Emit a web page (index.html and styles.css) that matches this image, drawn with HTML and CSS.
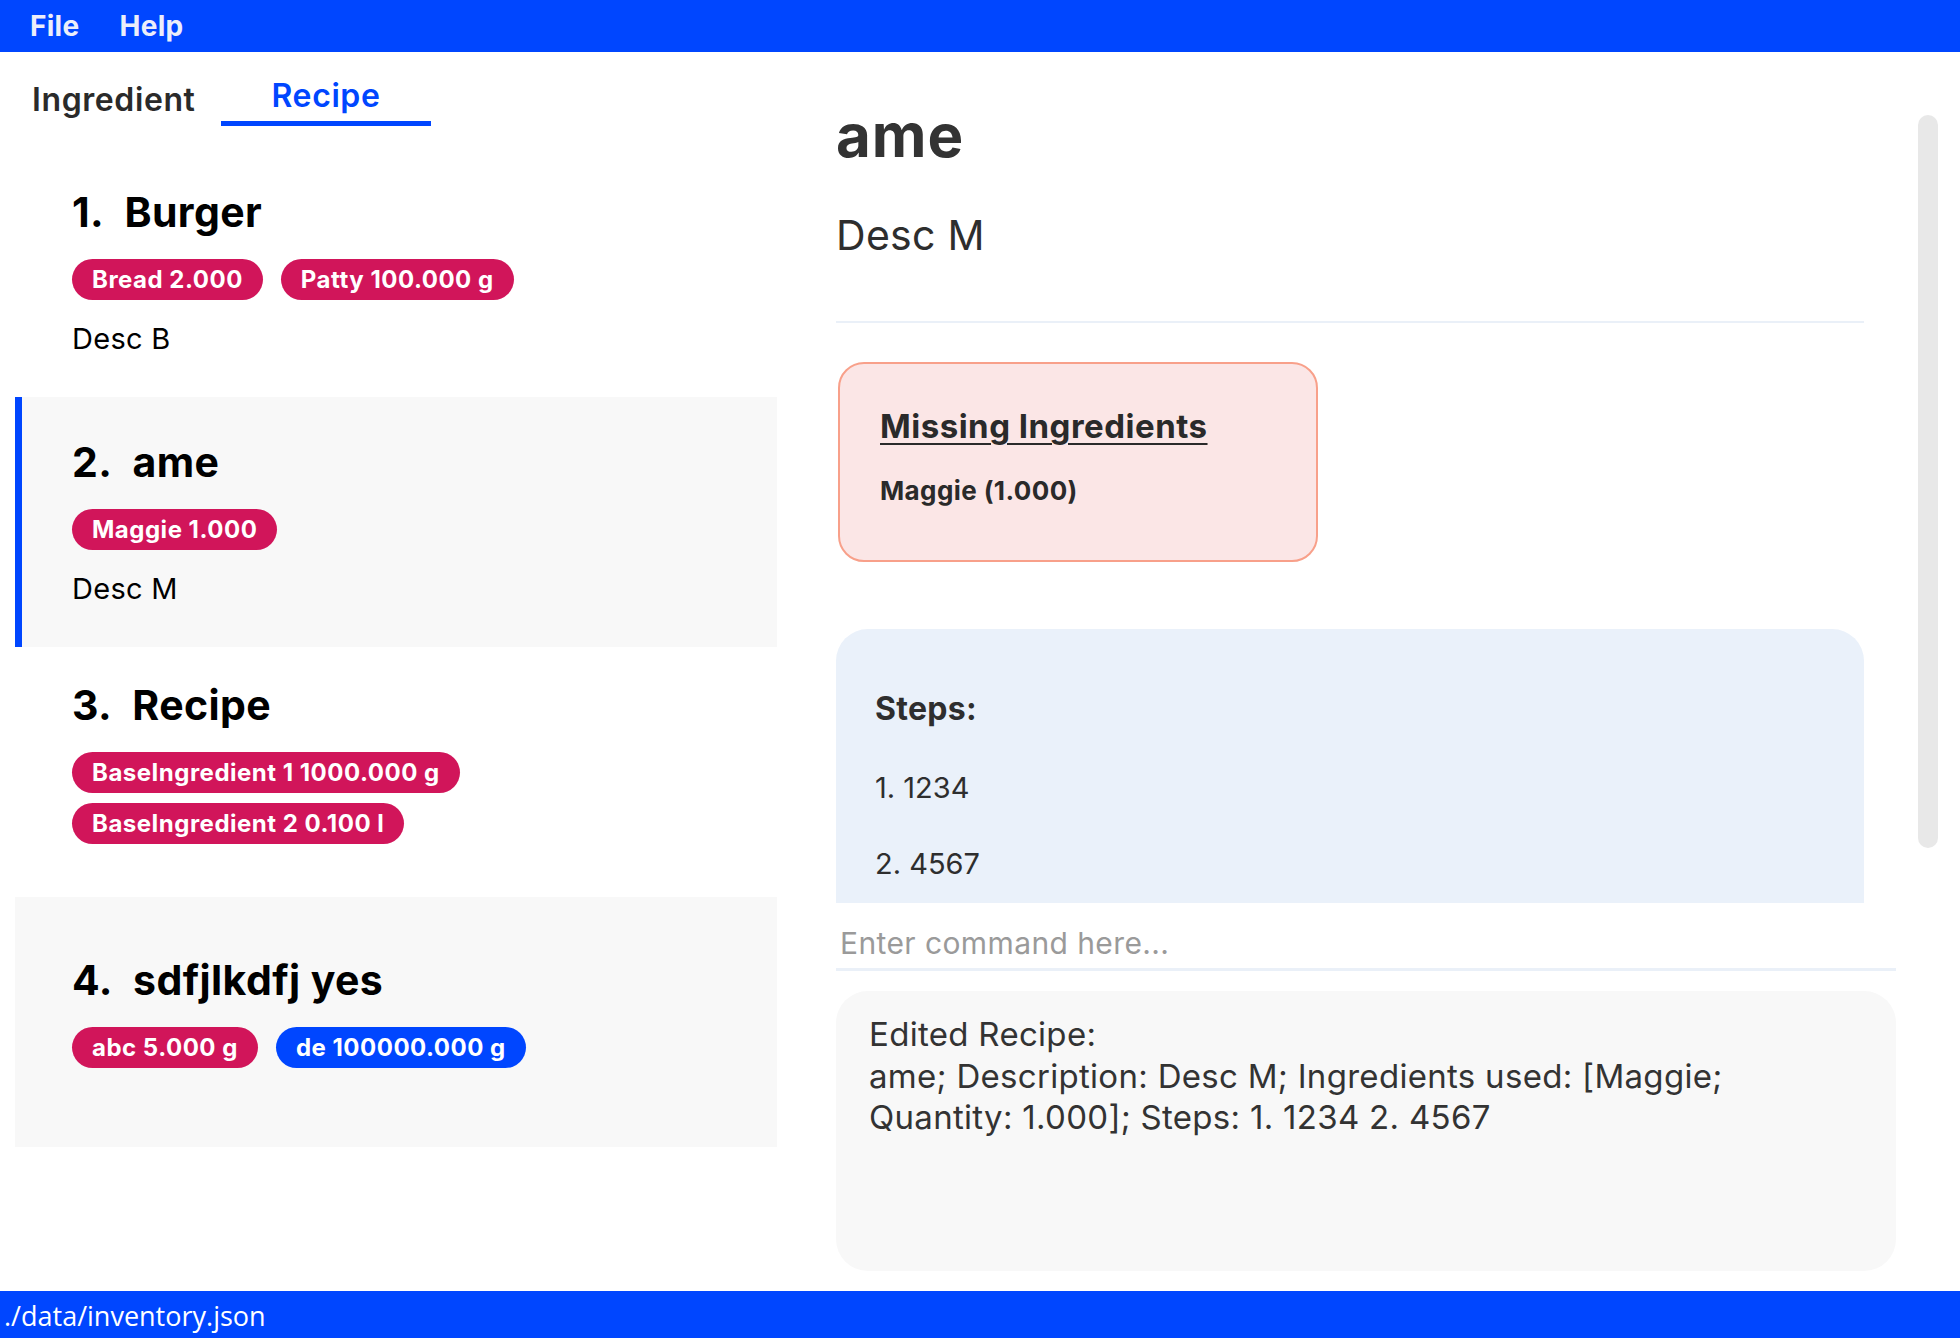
FILE: index.html
```html
<!DOCTYPE html>
<html>
<head>
<meta charset="utf-8">
<link rel="stylesheet" href="styles.css">
</head>
<body>
<div class="app">
  <div class="menubar">
    <span class="menu-item">File</span>
    <span class="menu-item">Help</span>
  </div>
  <div class="main">
    <div class="left">
      <div class="tabs">
        <div class="tab">Ingredient</div>
        <div class="tab tab-active">Recipe</div>
      </div>
      <div class="list">
        <div class="card">
          <div class="card-title">1.&nbsp; Burger</div>
          <div class="tags">
            <span class="tag">Bread 2.000</span>
            <span class="tag">Patty 100.000 g</span>
          </div>
          <div class="card-desc">Desc B</div>
        </div>
        <div class="card card-selected">
          <div class="card-title">2.&nbsp; ame</div>
          <div class="tags">
            <span class="tag">Maggie 1.000</span>
          </div>
          <div class="card-desc">Desc M</div>
        </div>
        <div class="card">
          <div class="card-title">3.&nbsp; Recipe</div>
          <div class="tags">
            <span class="tag">BaseIngredient 1 1000.000 g</span>
            <span class="tag">BaseIngredient 2 0.100 l</span>
          </div>
          <div class="card-desc"></div>
        </div>
        <div class="card card-alt">
          <div class="card-title">4.&nbsp; sdfjlkdfj yes</div>
          <div class="tags">
            <span class="tag">abc 5.000 g</span>
            <span class="tag tag-blue">de 100000.000 g</span>
          </div>
          <div class="card-desc"></div>
        </div>
      </div>
    </div>
    <div class="right">
      <div class="detail-scroll">
        <div class="detail">
          <h1 class="detail-name">ame</h1>
          <div class="detail-desc">Desc M</div>
          <div class="divider"></div>
          <div class="missing">
            <div class="missing-title">Missing Ingredients</div>
            <div class="missing-item">Maggie (1.000)</div>
          </div>
          <div class="steps">
            <div class="steps-title">Steps:</div>
            <div class="step">1. 1234</div>
            <div class="step">2. 4567</div>
          </div>
        </div>
        <div class="scrollbar"></div>
      </div>
      <div class="command">
        <input class="command-input" type="text" placeholder="Enter command here...">
      </div>
      <div class="result">Edited Recipe:<br>ame; Description: Desc M; Ingredients used: [Maggie;<br>Quantity: 1.000]; Steps: 1. 1234 2. 4567</div>
    </div>
  </div>
  <div class="statusbar">./data/inventory.json</div>
</div>
</body>
</html>
```

FILE: styles.css
```css
* { box-sizing: border-box; }
html, body { margin: 0; padding: 0; }
body {
  width: 1960px;
  height: 1338px;
  overflow: hidden;
  background: #ffffff;
  font-family: "Inter", "Liberation Sans", sans-serif;
}
.app {
  display: flex;
  flex-direction: column;
  height: 1338px;
}
.menubar {
  height: 52px;
  background: #0046ff;
  display: flex;
  align-items: center;
  padding-left: 30px;
  gap: 40px;
  flex-shrink: 0;
}
.menu-item {
  color: #eceefa;
  font-weight: 700;
  font-size: 28px;
  letter-spacing: 0.3px;
}
.main {
  flex: 1;
  display: flex;
  min-height: 0;
}
.left {
  width: 836px;
  padding-left: 15px;
  flex-shrink: 0;
}
.tabs {
  display: flex;
  height: 95px;
  align-items: flex-start;
}
.tab {
  font-size: 32px;
  letter-spacing: 0.6px;
  font-weight: 600;
  color: #2a2a2a;
  height: 74px;
  padding-top: 28px;
  padding-left: 17px;
  width: 206px;
}
.tab-active {
  width: 210px;
  padding-left: 0;
  padding-top: 24px;
  text-align: center;
  color: #0046ff;
  border-bottom: 5px solid #0046ff;
}
.list {
  width: 762px;
  display: flex;
  flex-direction: column;
}
.card {
  height: 250px;
  display: flex;
  flex-direction: column;
  justify-content: center;
  gap: 21px;
  padding-left: 57px;
}
.card-selected {
  background: #f8f8f8;
  border-left: 7px solid #0046ff;
  padding-left: 50px;
}
.card-alt {
  background: #f8f8f8;
}
.card-title {
  font-size: 41px;
  letter-spacing: 0.4px;
  line-height: 50px;
  font-weight: 700;
  color: #000;
  white-space: pre;
}
.tags {
  display: flex;
  flex-wrap: wrap;
  column-gap: 18px;
  row-gap: 10px;
  margin-top: 1px;
  max-width: 660px;
}
.tag {
  height: 41px;
  line-height: 41px;
  padding: 0 20px;
  border-radius: 21px;
  background: #d1155a;
  color: #fff;
  font-size: 24px;
  letter-spacing: 0.5px;
  font-weight: 700;
}
.tag-blue { background: #0046ff; }
.card-desc {
  font-size: 29px;
  letter-spacing: 0.3px;
  line-height: 36px;
  color: #000;
}
.card-desc:empty { line-height: 0; height: 0; }

.right {
  flex: 1;
  display: flex;
  flex-direction: column;
  padding-right: 22px;
}
.detail-scroll {
  height: 851px;
  display: flex;
  overflow: hidden;
  flex-shrink: 0;
}
.detail {
  width: 1028px;
  padding-top: 48px;
  color: #333;
}
.detail-name {
  margin: 0;
  font-size: 60px;
  letter-spacing: 1px;
  line-height: 70px;
  font-weight: 700;
  color: #333;
}
.detail-desc {
  margin-top: 40px;
  font-size: 41px;
  letter-spacing: 0.3px;
  line-height: 50px;
  color: #2e2e2e;
}
.divider {
  margin-top: 61px;
  height: 2px;
  background: #eaf0f8;
}
.missing {
  margin-top: 39px;
  margin-left: 2px;
  width: 480px;
  height: 200px;
  border: 2px solid #f8a08a;
  border-radius: 26px;
  background: #fbe6e6;
  padding: 42px 0 0 40px;
}
.missing-title {
  font-size: 33px;
  letter-spacing: 0.5px;
  line-height: 40px;
  font-weight: 700;
  text-decoration: underline;
  text-decoration-thickness: 2px;
  text-underline-offset: 5px;
  color: #2a2a2a;
}
.missing-item {
  margin-top: 28px;
  font-size: 26px;
  letter-spacing: 0.4px;
  line-height: 34px;
  font-weight: 700;
  color: #2a2a2a;
}
.steps {
  margin-top: 67px;
  background: #eaf1fa;
  border-radius: 32px 32px 0 0;
  padding: 60px 0 0 39px;
  height: 400px;
}
.steps-title {
  font-size: 32px;
  letter-spacing: 0.3px;
  line-height: 40px;
  font-weight: 700;
  color: #2e2e2e;
}
.step {
  margin-top: 39px;
  font-size: 29px;
  line-height: 40px;
  color: #2e2e2e;
}
.step + .step { margin-top: 36px; }
.scrollbar {
  margin-left: 54px;
  margin-top: 63px;
  width: 20px;
  height: 733px;
  border-radius: 10px;
  background: #e8e8e8;
}
.command {
  width: 1060px;
  height: 68px;
  border-bottom: 3px solid #eaf0f8;
}
.command-input {
  width: 100%;
  height: 65px;
  border: none;
  outline: none;
  background: transparent;
  padding: 14px 0 0 4px;
  font-family: "Inter", "Liberation Sans", sans-serif;
  font-size: 30px;
  letter-spacing: 0.4px;
  color: #333;
}
.command-input::placeholder { color: #9a9a9a; }
.result {
  margin-top: 20px;
  width: 1060px;
  height: 280px;
  background: #f8f8f8;
  border-radius: 32px;
  padding: 23px 0 0 33px;
  font-size: 33px;
  letter-spacing: 0.3px;
  line-height: 41.5px;
  color: #333;
}
.statusbar {
  height: 47px;
  flex-shrink: 0;
  background: #0046ff;
  color: #fff;
  font-family: "Open Sans", "Noto Sans", sans-serif;
  font-size: 27px;
  line-height: 49px;
  padding-left: 4px;
}
```
